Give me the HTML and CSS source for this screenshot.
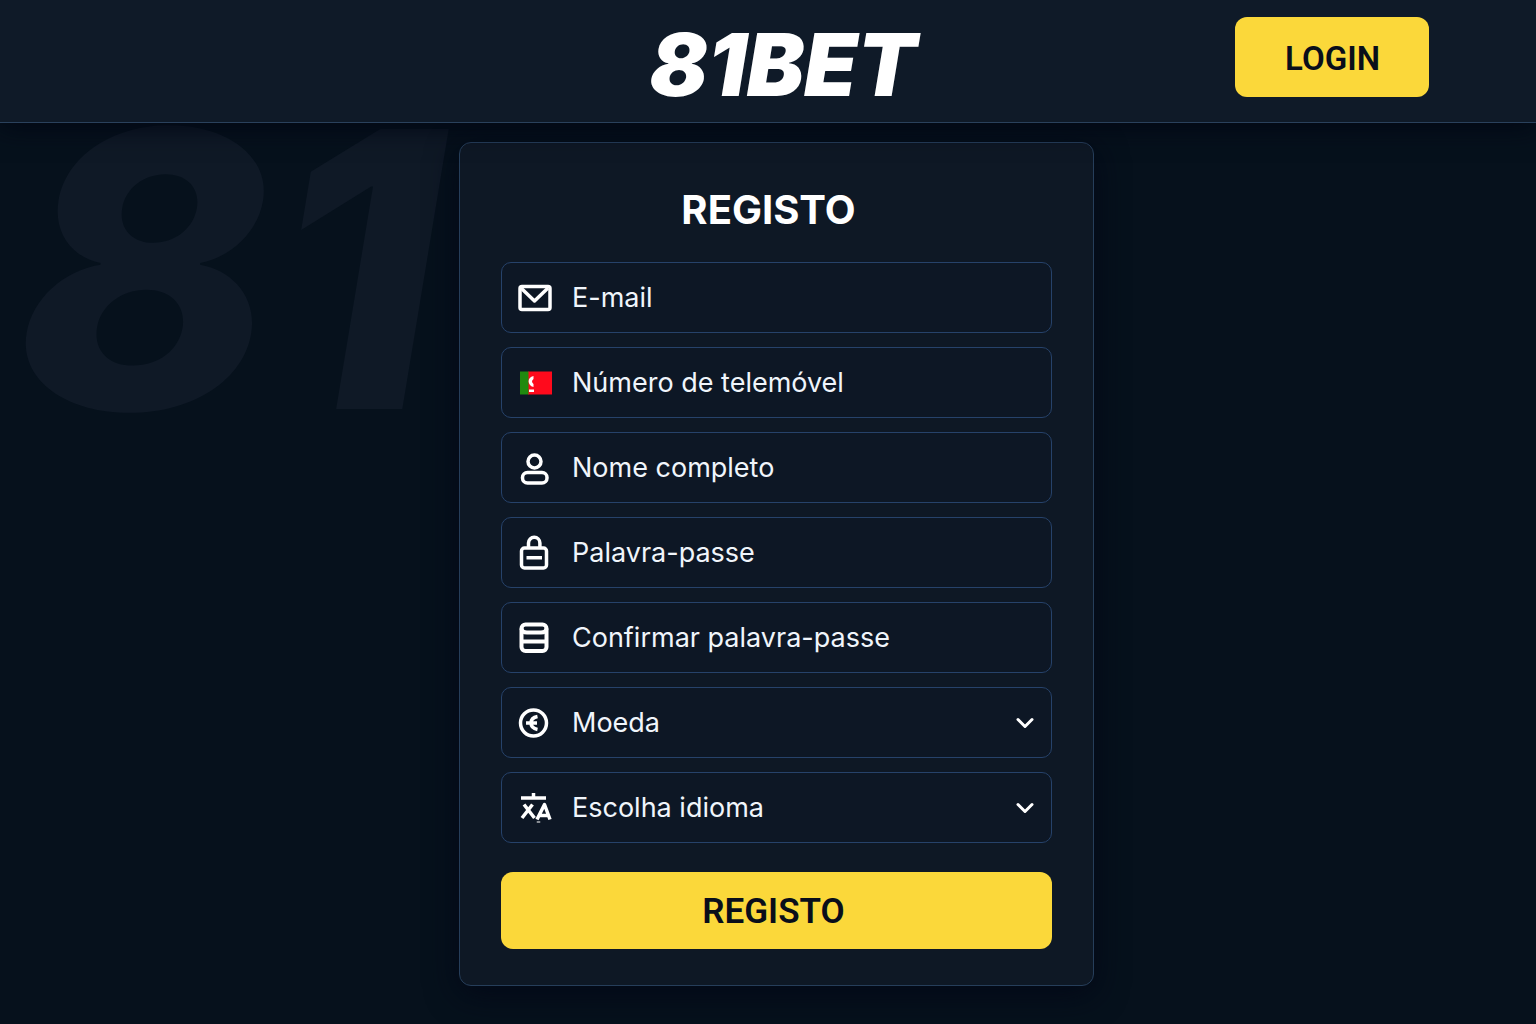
FILE: index.html
```html
<!DOCTYPE html>
<html lang="pt">
<head>
<meta charset="utf-8">
<meta name="viewport" content="width=device-width, initial-scale=1">
<title>81BET</title>
<link rel="stylesheet" href="styles.css">
</head>
<body>
<header class="header">
  <a class="logo" href="#">81BET</a>
  <button class="button login" type="button">LOGIN</button>
</header>
<main class="main">
  <div class="watermark" aria-hidden="true">81</div>
  <form class="card">
    <h1 class="title">REGISTO</h1>
    <div class="fields">
      <label class="field">
        <svg class="icon" viewBox="0 0 36 36" aria-hidden="true"><rect x="3" y="6.500" width="30" height="23" rx="2"/><path d="M4 8L17.500 21L31 8"/></svg>
        <input class="control" type="email" placeholder="E-mail" aria-label="E-mail">
      </label>
      <label class="field">
        <svg class="icon" viewBox="0 0 36 36" aria-hidden="true"><g stroke="none"><path fill="#ff0a1c" d="M11 6.500h24v23H11z"/><path fill="#1f8a0f" d="M3 6.500h8.500v23H3z"/><path fill="#fff" d="M16.500 11c-6.500 1-6.500 9.500 0 11v-3c-2-1.500-2-3.500 0-5zM12 24.500h5v2.500h-5z"/></g></svg>
        <input class="control" type="tel" placeholder="Número de telemóvel" aria-label="Número de telemóvel">
      </label>
      <label class="field">
        <svg class="icon" viewBox="0 0 36 36" aria-hidden="true"><circle cx="17.500" cy="11.500" r="6.500"/><rect x="5.500" y="22.500" width="24.500" height="10.500" rx="5"/></svg>
        <input class="control" type="text" placeholder="Nome completo" aria-label="Nome completo">
      </label>
      <label class="field">
        <svg class="icon" viewBox="0 0 36 36" aria-hidden="true"><rect x="4.500" y="13" width="25" height="20" rx="3"/><path d="M11.500 13V8a5.700 5.700 0 0 1 11.400 0v5M9.500 22.700h15.500"/></svg>
        <input class="control" type="password" placeholder="Palavra-passe" aria-label="Palavra-passe">
      </label>
      <label class="field">
        <svg class="icon" viewBox="0 0 36 36" aria-hidden="true"><g stroke-width="4"><rect x="4.500" y="4.500" width="25" height="26.500" rx="4"/><path d="M4.500 8.500Q5 12.500 10 12.500H24Q29 12.500 29.500 8.500M4.500 21.500H30"/></g></svg>
        <input class="control" type="password" placeholder="Confirmar palavra-passe" aria-label="Confirmar palavra-passe">
      </label>
      <label class="field">
        <svg class="icon" viewBox="0 0 36 36" aria-hidden="true"><circle cx="16.500" cy="18" r="13"/><path d="M20.500 11.500C15.500 12.500 14 15 14 18S15.500 23.500 20.500 24.500M9 18h11"/></svg>
        <select class="control" aria-label="Moeda"><option>Moeda</option></select>
        <svg class="chevron" viewBox="0 0 20 20" aria-hidden="true"><path d="M3 6.500L10 13.500L17 6.500"/></svg>
      </label>
      <label class="field">
        <svg class="icon" viewBox="0 0 36 36" aria-hidden="true"><path d="M4 8H29M16.500 3V8M7 14.500L17.500 28M15.500 14.500L5 28M20 29.500L27.500 14.500L33 29.500M23 25.500H31M21.500 31.500v1"/></svg>
        <select class="control" aria-label="Escolha idioma"><option>Escolha idioma</option></select>
        <svg class="chevron" viewBox="0 0 20 20" aria-hidden="true"><path d="M3 6.500L10 13.500L17 6.500"/></svg>
      </label>
    </div>
    <button class="button submit" type="submit">REGISTO</button>
  </form>
</main>
</body>
</html>
```
FILE: styles.css
```css
* {
  box-sizing: border-box;
}

body {
  margin: 0;
  min-height: 100vh;
  background: #06111c;
  color: #fff;
  font-family: Inter, "Liberation Sans", sans-serif;
}

.header {
  position: relative;
  z-index: 1;
  display: grid;
  grid-template-columns: 1fr auto 1fr;
  align-items: center;
  padding: 17px 107px 25px 137px;
  background: #0f1a28;
  border-bottom: 1px solid #2a415c;
  box-shadow: 0 4px 24px #020714;
}

.logo {
  grid-column: 2;
  padding-top: 17px;
  color: #fff;
  font-size: 86px;
  font-style: italic;
  font-weight: 900;
  line-height: 63px;
  text-decoration: none;
}

.button {
  border: 0;
  border-radius: 12px;
  background: #fbd83a;
  color: #090e1a;
  font-family: Roboto, "Liberation Sans", sans-serif;
  font-weight: 600;
  cursor: pointer;
}

.login {
  justify-self: end;
  height: 80px;
  padding: 2px 49px 0 50px;
  font-size: 33px;
}

.main {
  position: relative;
  padding: 19px 0 38px 17px;
}

.watermark {
  position: absolute;
  top: -46px;
  left: 16px;
  color: #0f1926;
  font-size: 385px;
  font-style: italic;
  font-weight: 800;
  line-height: 385px;
}

.card {
  position: relative;
  max-width: 635px;
  margin: 0 auto;
  padding: 41px 41px 36px;
  background: #0e1825;
  border: 1px solid #263e5a;
  border-radius: 12px;
  box-shadow: 0 8px 32px #030817;
}

.title {
  margin: 0 0 26px;
  padding-right: 16px;
  font-size: 40px;
  font-weight: 700;
  line-height: 52px;
  text-align: center;
}

.fields {
  display: grid;
  gap: 14px;
}

.field {
  display: flex;
  align-items: center;
  gap: 19px;
  height: 71px;
  padding: 0 16px 0 15px;
  background: #0d1725;
  border: 1px solid #26426a;
  border-radius: 10px;
}

.icon {
  flex: none;
  width: 36px;
  height: 36px;
  fill: none;
  stroke: #fff;
  stroke-width: 3.5;
  stroke-linejoin: round;
}

.chevron {
  flex: none;
  width: 20px;
  height: 20px;
  fill: none;
  stroke: #fff;
  stroke-width: 3;
  stroke-linecap: round;
  stroke-linejoin: round;
}

.control {
  flex: 1;
  min-width: 0;
  height: 100%;
  padding: 0;
  border: 0;
  outline: 0;
  appearance: none;
  background: transparent;
  color: #f0f5fb;
  font: 400 27px Inter, "Liberation Sans", sans-serif;
}

.control::placeholder {
  color: #f0f5fb;
  opacity: 1;
}

.submit {
  display: block;
  width: 100%;
  height: 77px;
  margin-top: 29px;
  padding: 1px 6px 0 0;
  font-size: 35px;
}
```
